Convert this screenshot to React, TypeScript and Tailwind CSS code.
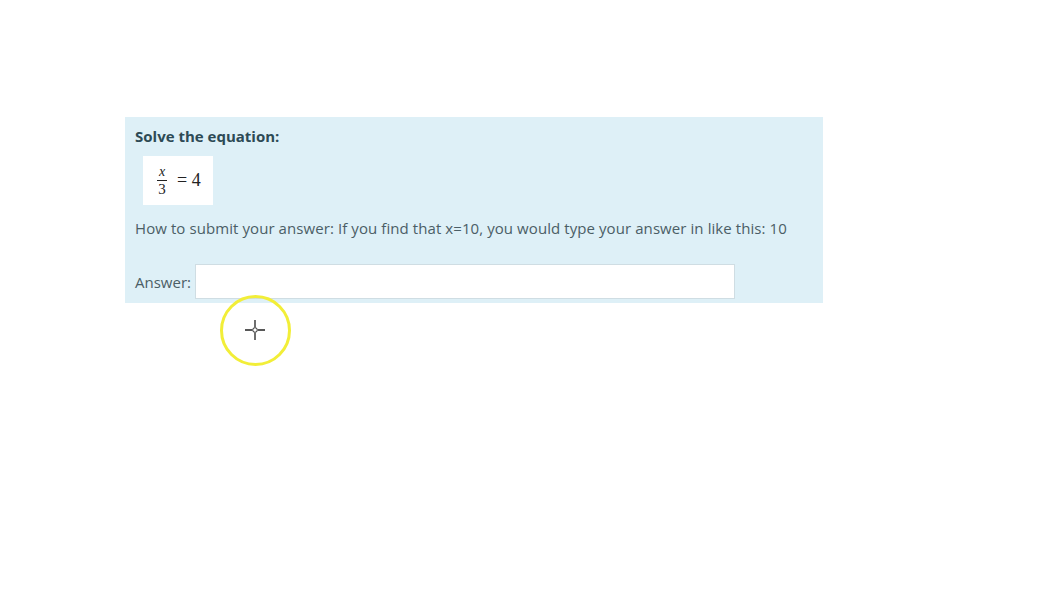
import React from "react";

export default function App() {
  return (
    <div className="relative w-[1052px] h-[604px] bg-white overflow-hidden font-['Open_Sans',_'Noto_Sans',_sans-serif]">
      <div className="h-[117px]" />
      <div className="ml-[125px] w-[698px] bg-[#def0f7] pl-[10px] pt-[8px] pb-[4px]">
        <div className="text-[15px] font-bold text-[#2d4a55] leading-[22px]">Solve the equation:</div>
        <div className="ml-[8px] mt-[9px] w-[70px] h-[49px] bg-white flex items-center pl-[14px] font-['Liberation_Serif',_'DejaVu_Serif',_serif]">
          <div className="flex flex-col items-center text-[#222] leading-none">
            <span className="italic text-[14px] leading-[12px]">x</span>
            <span className="block w-[10px] h-px bg-[#222] my-[2px]" />
            <span className="text-[15px] leading-[13px]">3</span>
          </div>
          <span className="ml-[10px] text-[18px] text-[#222] font-['Liberation_Serif',_serif]">= 4</span>
        </div>
        <div className="mt-[12px] text-[15px] tracking-[0.08px] text-[#4b5e66] leading-[22px]">
          How to submit your answer: If you find that x=10, you would type your answer in like this: 10
        </div>
        <div className="mt-[25px] flex items-center">
          <span className="text-[15px] text-[#4b5e66] mt-[2px]">Answer:</span>
          <input className="ml-[4px] w-[540px] h-[35px] bg-white border border-[#cfdde3] outline-none" />
        </div>
      </div>
      <div className="absolute left-[220px] top-[295px] w-[71px] h-[71px] rounded-full border-[3px] border-[#f2ee38]" />
      <svg className="absolute left-[244px] top-[319px]" width="22" height="22" viewBox="0 0 22 22">
        <path d="M11 1v7M11 14v7M1 11h7M14 11h7" stroke="#222" strokeWidth="1.3" />
        <circle cx="11" cy="11" r="2.3" fill="none" stroke="#222" strokeWidth="1" />
      </svg>
    </div>
  );
}
